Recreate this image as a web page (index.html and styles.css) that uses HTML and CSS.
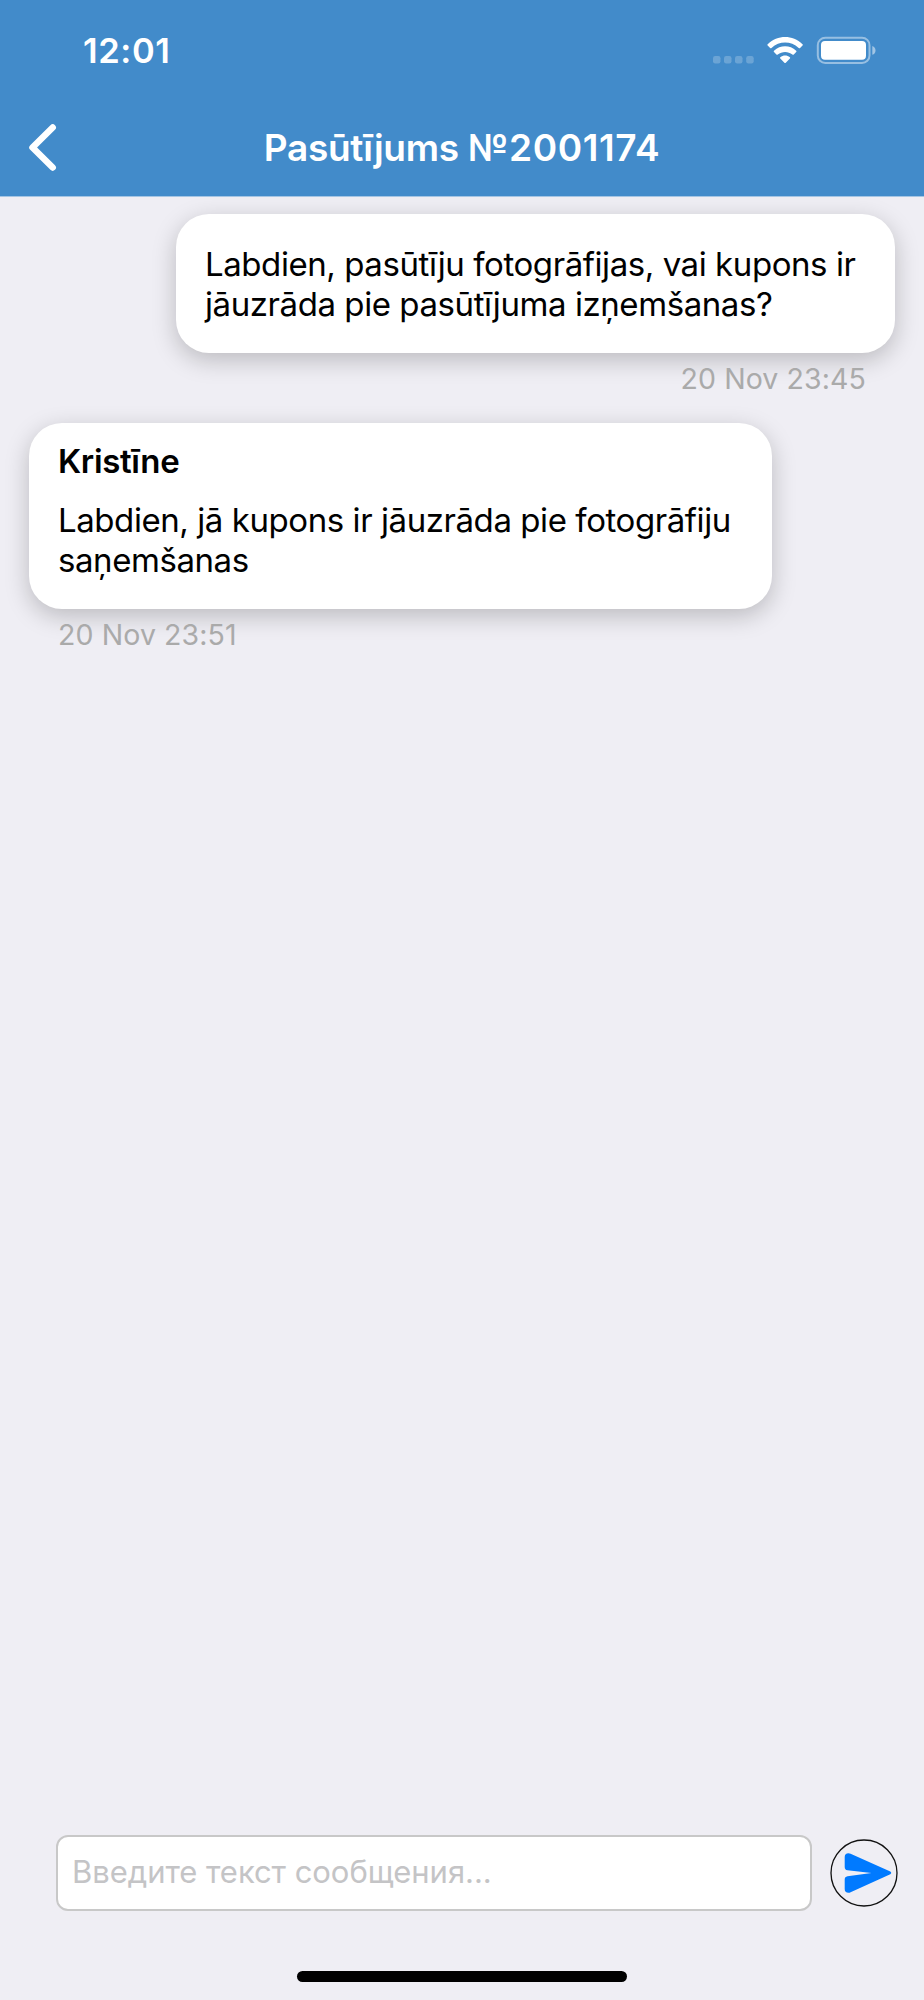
FILE: index.html
```html
<!DOCTYPE html>
<html lang="lv">
<head>
<meta charset="utf-8">
<title>Pasūtījums №2001174</title>
<link rel="stylesheet" href="styles.css">
</head>
<body>
<div class="app">
  <header class="header">
    <div class="status-bar">
      <span class="clock">12:01</span>
      <svg class="status-icons" width="166" height="32" viewBox="0 0 166 32" aria-hidden="true">
        <g fill="#fff" fill-opacity=".22">
          <rect x="1" y="20" width="7.5" height="7.5" rx="2.2"/>
          <rect x="12" y="20" width="7.5" height="7.5" rx="2.2"/>
          <rect x="23" y="20" width="7.5" height="7.5" rx="2.2"/>
          <rect x="34.2" y="20" width="7.5" height="7.5" rx="2.2"/>
        </g>
        <g fill="#fff">
          <path d="M55.7 8.2C65.5-1.300 80.700-1.300 90.500 8.200Q91.200 8.900 90.500 9.600L88.100 12Q87.400 12.600 86.700 12C78.900 4.700 67.300 4.700 59.500 12Q58.800 12.600 58.100 12L55.700 9.600Q55 8.900 55.700 8.200Z"/>
          <path d="M62 14.700C68.400 8.900 77.800 8.900 84.200 14.700Q84.900 15.400 84.200 16.100L81.800 18.500Q81.100 19.100 80.400 18.500C76.200 15 70 15 65.800 18.500Q65.100 19.100 64.400 18.500L62 16.100Q61.300 15.400 62 14.700Z"/>
          <path d="M68.300 21.200C71.200 19 75 19 77.900 21.200Q78.600 21.900 77.900 22.600L73.800 26.700Q73.100 27.400 72.400 26.700L68.300 22.600Q67.600 21.900 68.300 21.200Z"/>
        </g>
        <rect x="105.8" y="1.700" width="51.700" height="25.300" rx="7.500" fill="none" stroke="#fff" stroke-opacity=".45" stroke-width="2"/>
        <rect x="109" y="5" width="45" height="18.800" rx="4" fill="#fff"/>
        <path d="M160.300 10Q163.500 11.300 163.500 14.400T160.300 18.800Z" fill="#fff" fill-opacity=".5"/>
      </svg>
    </div>
    <div class="nav-bar">
      <svg class="back" width="30" height="50" viewBox="0 0 30 50" aria-hidden="true"><path d="M24.700 4.500L4.500 24.500L24.700 44.500" fill="none" stroke="#fff" stroke-width="6.500" stroke-linecap="round" stroke-linejoin="round"/></svg>
      <h1 class="title">Pasūtījums <span class="order-number">№2001174</span></h1>
    </div>
  </header>

  <main class="chat">
    <section class="message message-own">
      <div class="bubble">
        <p class="text">Labdien, pasūtīju fotogrāfijas, vai kupons ir<br>jāuzrāda pie pasūtījuma izņemšanas?</p>
      </div>
      <time class="time">20 Nov 23:45</time>
    </section>
    <section class="message message-reply">
      <div class="bubble">
        <h2 class="author">Kristīne</h2>
        <p class="text">Labdien, jā kupons ir jāuzrāda pie fotogrāfiju<br>saņemšanas</p>
      </div>
      <time class="time">20 Nov 23:51</time>
    </section>
  </main>

  <footer class="composer">
    <div class="field">Введите текст сообщения...</div>
    <div class="send">
      <svg width="68" height="68" viewBox="0 0 68 68" aria-hidden="true">
        <circle cx="34" cy="34" r="33" fill="none" stroke="#111" stroke-width="1.300"/>
        <path d="M14.700 30.800V18Q14.700 14.200 18.500 14.200Q19.600 14.200 20.600 14.700L60.300 32.400Q62.200 33.800 60.300 35.200L20.600 53.200Q19.600 53.700 18.500 53.700Q14.700 53.700 14.700 49.900V40.500Q14.700 37.700 17.500 37.200L41.500 34L17.500 31.300Q14.700 30.800 14.700 28Z" fill="#007aff"/>
      </svg>
    </div>
  </footer>
  <div class="home-indicator"></div>
</div>
</body>
</html>
```
FILE: styles.css
```css
* {
  box-sizing: border-box;
}

body {
  margin: 0;
  font-family: Inter, sans-serif;
  color: #000;
}

h1, h2, p {
  margin: 0;
}

svg {
  display: block;
}

.app {
  display: flex;
  flex-direction: column;
  width: 924px;
  height: 2000px;
  padding-bottom: 18px;
  background: #efeef4;
}

.header {
  height: 197px;
  background: #428bca;
  border-bottom: 1px solid #a4c5e4;
  color: #fff;
}

.status-bar {
  display: flex;
  justify-content: space-between;
  align-items: flex-start;
  height: 100px;
  padding: 30px 46px 0 83px;
}

.clock {
  font-size: 34.5px;
  line-height: 42px;
  font-weight: 600;
  letter-spacing: .6px;
}

.status-icons {
  margin-top: 6px;
}

.nav-bar {
  display: grid;
  grid-template-columns: 100px 1fr 100px;
  align-items: center;
  height: 96px;
}

.back {
  margin-left: 28px;
}

.title {
  font-size: 37px;
  line-height: 44px;
  font-weight: 600;
  letter-spacing: -.3px;
  text-align: center;
  white-space: nowrap;
}

.order-number {
  letter-spacing: .6px;
}

.chat {
  display: flex;
  flex: 1;
  flex-direction: column;
  gap: 27px;
  padding: 17px 29px 0;
}

.message {
  display: flex;
  flex-direction: column;
  align-items: flex-start;
}

.message-own {
  align-items: flex-end;
}

.bubble {
  width: 743px;
  padding: 31px 29px 29px;
  border-radius: 33px;
  background: #fff;
  box-shadow: 0 7px 24px rgba(0, 0, 0, .22);
}

.message-own .bubble {
  width: 719px;
}

.message-reply .bubble {
  padding-top: 19px;
}

.text,
.author {
  font-size: 33px;
  line-height: 39.5px;
  letter-spacing: -.43px;
  white-space: nowrap;
}

.author {
  margin-bottom: 19.5px;
  font-weight: 600;
  letter-spacing: -.35px;
}

.time {
  margin: 9px 29px 0;
  font-size: 28.5px;
  line-height: 34px;
  letter-spacing: .1px;
  color: #aaa;
}

.composer {
  display: flex;
  align-items: center;
  gap: 18px;
  height: 76px;
  margin: 0 26px 60px 56px;
}

.field {
  width: 756px;
  height: 76px;
  padding: 16px 14px;
  border: 2px solid #c8c8c8;
  border-radius: 12px;
  background: #fff;
  color: #c4c4c6;
  font-size: 31px;
  line-height: 38px;
  letter-spacing: -.05px;
  white-space: nowrap;
}

.home-indicator {
  align-self: center;
  width: 330px;
  height: 11px;
  border-radius: 6px;
  background: #000;
}
```
